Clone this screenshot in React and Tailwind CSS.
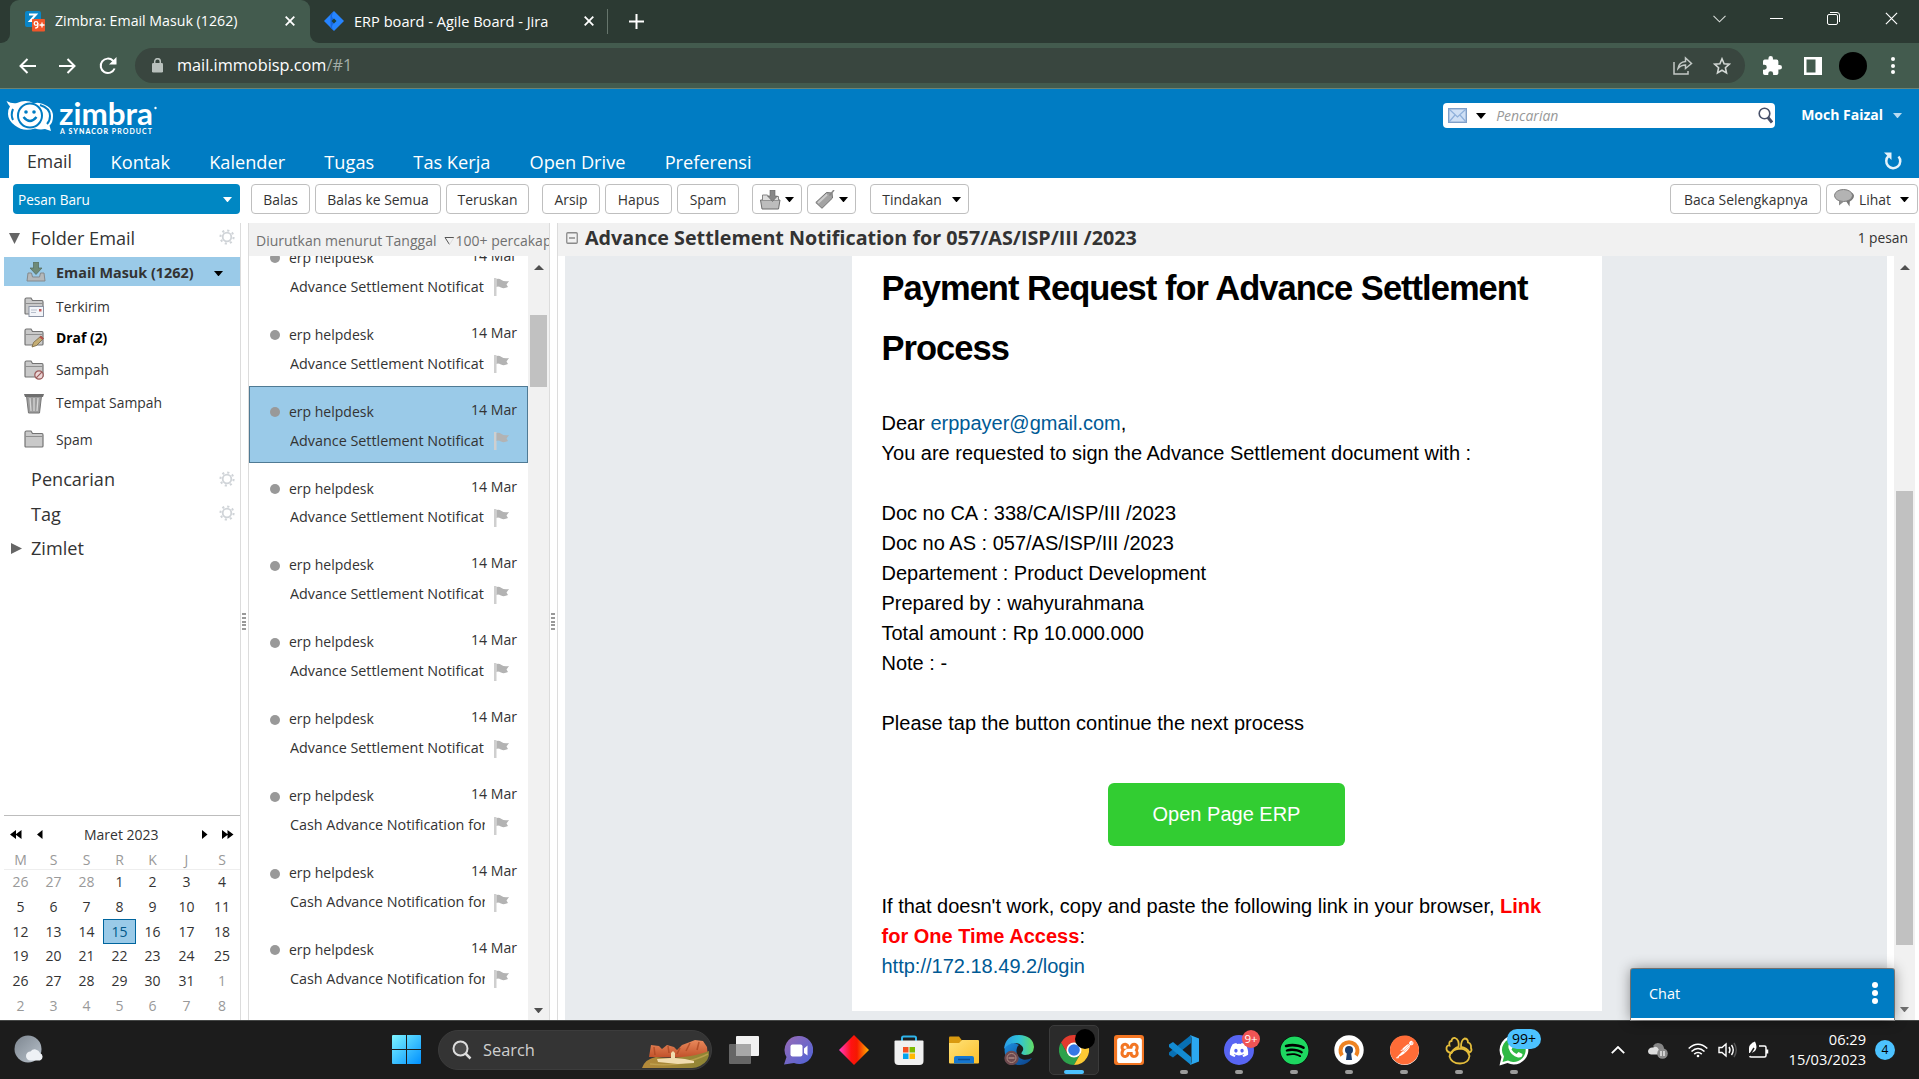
import { FaDiscord, FaSpotify, FaWhatsapp } from "react-icons/fa";
import { SiPostman, SiXampp } from "react-icons/si";

const Caret = ({ className = "", w = 10 }) => (
  <svg width={w} height={w * 0.6} viewBox="0 0 10 6" className={className}>
    <path d="M0 0h10L5 6z" fill="currentColor" />
  </svg>
);

const Close = ({ size = 10, className = "", sw = 1.8 }) => (
  <svg width={size} height={size} viewBox="0 0 10 10" className={className} fill="none" stroke="currentColor" strokeWidth={sw}>
    <path d="M.7.7l8.6 8.6M9.3.7L.7 9.3" />
  </svg>
);

function TabStrip() {
  return (
    <div className="flex h-[43px] bg-[#2c3a33] text-white">
      <div className="flex w-[10px] items-end bg-[#435b4e]">
        <div className="h-[43px] w-[10px] rounded-br-[9px] bg-[#2c3a33]" />
      </div>
      <div className="flex w-[300px] items-center rounded-t-[9px] bg-[#435b4e] pb-px pl-[15px]">
        <svg width="21" height="21" viewBox="0 0 21 21" className="shrink-0">
          <rect width="16" height="16" rx="2" fill="#0a86c8" />
          <path d="M4 3.5h7L5 10h5" fill="none" stroke="#fff" strokeWidth="2" />
          <rect x="7" y="8" width="13" height="12.5" rx="1" fill="#f0562a" />
          <circle cx="11" cy="12.5" r="1.8" fill="none" stroke="#fff" strokeWidth="1.3" />
          <path d="M12.8 12v3q0 2-2.6 2M14.5 14h5M17 11.5v5" fill="none" stroke="#fff" strokeWidth="1.3" />
        </svg>
        <span className="ml-[9px] w-[192px] whitespace-nowrap text-[14.2px] leading-none">Zimbra: Email Masuk (1262)</span>
        <Close className="ml-[38px]" />
      </div>
      <div className="w-[10px] bg-[#435b4e]">
        <div className="h-[43px] w-[10px] rounded-bl-[9px] bg-[#2c3a33]" />
      </div>
      <div className="flex w-[288px] items-center pb-px pl-[4px]">
        <svg width="20" height="20" viewBox="0 0 20 20" className="shrink-0">
          <path d="M10 0l10 10-10 10L0 10z" fill="#2684ff" />
          <path d="M10 0q-4 5 0 8.500L12 10l-2 2q-4 4 0 8l-3.500-3.500V3.500z" fill="#1666e0" />
          <path d="M10 7.500l2.500 2.500-2.500 2.500L7.500 10z" fill="#1d3f3a" />
        </svg>
        <span className="ml-[10px] w-[205px] whitespace-nowrap text-[14.6px] leading-none">ERP board - Agile Board - Jira</span>
        <Close className="ml-[25px]" />
        <div className="ml-auto h-[25px] w-px bg-[#66756c]" />
      </div>
      <div className="flex flex-1 items-center pl-[21px]">
        <svg width="15" height="15" viewBox="0 0 15 15" stroke="#fff" strokeWidth="2">
          <path d="M7.500 0v15M0 7.500h15" />
        </svg>
      </div>
      <div className="flex w-[206px] items-center pb-[6px]">
        <svg width="13" height="8" viewBox="0 0 13 8" fill="none" stroke="#d6dbd8" strokeWidth="1.100">
          <path d="M.5.800l6 6 6-6" />
        </svg>
        <div className="ml-[44px] h-px w-[13px] bg-white" />
        <svg width="13" height="13" viewBox="0 0 13 13" fill="none" stroke="#fff" className="ml-[44px]">
          <rect x=".5" y="2.500" width="10" height="10" rx="1.500" />
          <path d="M3 .5h7q2.500 0 2.500 2.500v7" />
        </svg>
        <Close className="ml-[45px]" size={13} sw={0.9} />
      </div>
    </div>
  );
}

function AddressBar() {
  return (
    <div className="flex h-[46px] items-center border-b border-[#6c8373] bg-[#435b4e] pl-[19px] text-white">
      <svg width="17" height="16" viewBox="0 0 17 16" fill="none" stroke="currentColor" strokeWidth="2">
        <path d="M17 8H1.500M8.500 1L1.500 8l7 7" />
      </svg>
      <svg width="17" height="16" viewBox="0 0 17 16" fill="none" stroke="currentColor" strokeWidth="2" className="ml-[23px]">
        <path d="M0 8h15.500M8.500 1l7 7-7 7" />
      </svg>
      <svg width="18" height="18" viewBox="0 0 18 18" fill="none" stroke="currentColor" strokeWidth="2" className="ml-[23px]">
        <path d="M15.600 11.500A7.200 7.200 0 1 1 14 3.700L16.500 6.500" />
        <path d="M17.500 0v7.500H10z" fill="currentColor" stroke="none" />
      </svg>
      <div className="ml-[18px] flex h-[35px] w-[1610px] items-center rounded-full bg-[#39463f] pl-[17px]">
        <svg width="11" height="15" viewBox="0 0 11 15">
          <rect y="5" width="11" height="9.500" rx="1.300" fill="#b9c1bd" />
          <path d="M2.700 6V3.500a2.800 2.800 0 0 1 5.600 0V6" fill="none" stroke="#b9c1bd" strokeWidth="1.500" />
        </svg>
        <span className="ml-[14px] text-[16.300px] leading-none">
          mail.immobisp.com<span className="text-[#a3ada8]">/#1</span>
        </span>
        <svg width="20" height="19" viewBox="0 0 20 19" fill="none" stroke="#c3c9c6" strokeWidth="1.500" className="ml-auto">
          <path d="M1 6v12h14v-3M5 12.500Q6 6 12.500 5.500V2l6 5.500-6 5V9Q8 9 5 12.500z" />
        </svg>
        <svg width="18" height="18" viewBox="0 0 18 18" fill="none" stroke="#d3d8d5" strokeWidth="1.600" className="ml-[20px] mr-[14px]">
          <path d="M9 1.800l2.100 4.900 5.200.5-3.900 3.500 1.100 5.200L9 13.200l-4.500 2.700 1.100-5.200L1.700 7.200l5.200-.5z" />
        </svg>
      </div>
      <svg width="19" height="19" viewBox="2 1 21 21" fill="currentColor" className="ml-[18px]">
        <path d="M20.500 11H19V7a2 2 0 0 0-2-2h-4V3.500a2.500 2.500 0 0 0-5 0V5H4a2 2 0 0 0-2 2v3.800h1.500a2.700 2.700 0 0 1 0 5.400H2V20a2 2 0 0 0 2 2h3.800v-1.500a2.700 2.700 0 0 1 5.400 0V22H17a2 2 0 0 0 2-2v-4h1.500a2.500 2.500 0 0 0 0-5z" />
      </svg>
      <svg width="18" height="18" viewBox="0 0 18 18" className="ml-[22px]">
        <path d="M0 0h18v18H0zM2.500 2.500v13h9v-13z" fill="#fff" fillRule="evenodd" />
      </svg>
      <div className="ml-[17px] size-[28px] rounded-full bg-black" />
      <div className="ml-[24px] flex flex-col gap-[2.500px]">
        <i className="size-1 rounded-full bg-white" />
        <i className="size-1 rounded-full bg-white" />
        <i className="size-1 rounded-full bg-white" />
      </div>
    </div>
  );
}

function ZimbraLogo() {
  return (
    <svg width="152" height="38" viewBox="-2 0 152 38" className="block">
      <path d="M-1.500 2Q4 5 9 4 18 0 26 4.500q3-1 5-.5 14 3 14 13 0 7-3.500 9.500L43 32l-6-2q-5 1-10-.5-12 3.500-20-3-7-5-7-11.500 0-5 2-7.500-2-2-3.500-5.500z" fill="#fff" />
      <circle cx="22" cy="16.500" r="12" fill="none" stroke="#007cc3" strokeWidth="2" />
      <path d="M5 10q-2.500 6 0 11M32 6q10 3 10 11 0 5-3 8" fill="none" stroke="#007cc3" strokeWidth="2" />
      <circle cx="18" cy="13" r="1.800" fill="#007cc3" />
      <circle cx="26" cy="13" r="1.800" fill="#007cc3" />
      <path d="M15.500 18q6.500 8 13 0" fill="none" stroke="#007cc3" strokeWidth="2.400" />
      <text x="51" y="26" fill="#fff" fontFamily="Lato" fontWeight="700" fontSize="31" textLength="94" lengthAdjust="spacingAndGlyphs">zimbra</text>
      <circle cx="147.500" cy="9" r="1.200" fill="#fff" />
      <text x="52" y="34.500" fill="#fff" fontFamily="Lato" fontSize="7" fontWeight="700" textLength="92">
        A <tspan fontWeight="900">SYNACOR</tspan> PRODUCT
      </text>
    </svg>
  );
}

function Header() {
  return (
    <div className="flex h-[89px] flex-col bg-[#007cc3] text-white">
      <div className="flex h-[56px] items-start">
        <div className="pl-[6px] pt-[10px]"><ZimbraLogo /></div>
        <div className="ml-auto mt-[14px] flex h-[25px] w-[332px] items-center rounded-[4px] bg-white pl-[5px] pr-[2px]">
          <svg width="19" height="15" viewBox="0 0 19 15">
            <rect x=".7" y=".7" width="17.600" height="13.600" fill="#cfe0f5" stroke="#7f9fc8" strokeWidth="1.400" />
            <path d="M1 1l8.500 8L18 1M1 14l6-7M18 14l-6-7" fill="none" stroke="#8fb0da" strokeWidth="1.200" />
          </svg>
          <Caret className="ml-[9px] text-black" w={10} />
          <span className="ml-[10px] text-[14px] italic leading-none text-[#999]">Pencarian</span>
          <svg width="15" height="17" viewBox="0 0 15 17" fill="none" stroke="#475069" className="ml-auto">
            <circle cx="6.500" cy="6.500" r="5.300" strokeWidth="1.600" />
            <path d="M10 10.500l4 5" strokeWidth="3" />
          </svg>
        </div>
        <span className="ml-[26px] mt-[19px] text-[14px] font-bold leading-none">Moch Faizal</span>
        <Caret w={9} className="ml-[10px] mr-[17px] mt-[24px] text-[#b9dcf2]" />
      </div>
      <div className="flex h-[33px] items-center gap-[2px] pl-[9px] pt-px text-[18.200px] leading-none">
        <div className="-mt-px flex h-[33px] w-[81px] items-center justify-center bg-white text-[17.700px] text-[#333]">Email</div>
        {["Kontak", "Kalender", "Tugas", "Tas Kerja", "Open Drive", "Preferensi"].map((t) => (
          <div key={t} className="px-[18.600px]">{t}</div>
        ))}
        <svg width="18" height="18" viewBox="0 0 18 18" className="ml-auto mr-[17px] -mt-[2px]" fill="none" stroke="#e4f2fa" strokeWidth="2.500">
          <path d="M4.500 4A7 7 0 1 0 14.500 4.500" />
          <path d="M0 .5h7.500V8z" fill="#e4f2fa" stroke="none" />
        </svg>
      </div>
    </div>
  );
}

const Btn = ({ className, children }) => (
  <div className={"flex h-[30px] shrink-0 items-center justify-center whitespace-nowrap rounded-[4px] border border-[#bfbfbf] bg-white pt-px text-[13.900px] leading-none text-[#333] " + className}>
    {children}
  </div>
);

function Toolbar() {
  return (
    <div className="flex h-[45px] items-start bg-white pl-[13px] pt-[6px]">
      <div className="flex h-[30px] w-[227px] items-center justify-between rounded-[4px] bg-[#0087c3] pl-[5px] pr-[8px] pt-px text-[13.600px] leading-none text-white">
        Pesan Baru <Caret w={9} />
      </div>
      <Btn className="ml-[11px] w-[59px]">Balas</Btn>
      <Btn className="ml-[5px] w-[126px]">Balas ke Semua</Btn>
      <Btn className="ml-[5px] w-[83px]">Teruskan</Btn>
      <Btn className="ml-[13px] w-[58px]">Arsip</Btn>
      <Btn className="ml-[5px] w-[67px]">Hapus</Btn>
      <Btn className="ml-[5px] w-[62px]">Spam</Btn>
      <Btn className="ml-[13px] w-[50px]">
        <svg width="21" height="20" viewBox="0 0 21 20">
          <path d="M2 19l-1.500-9h19.500l-1.500 9z" fill="#bdbdbd" stroke="#6d6d6d" />
          <path d="M2.500 10V5h5l1 1.500h10V10" fill="#ddd" stroke="#858585" />
          <path d="M10 0h5v6h2.500l-5 5.500-5-5.500H10z" fill="#888" stroke="#666" strokeWidth=".6" />
        </svg>
        <Caret w={9} className="ml-[4px] text-black" />
      </Btn>
      <Btn className="ml-[5px] w-[49px]">
        <svg width="20" height="19" viewBox="0 0 20 19">
          <path d="M.8 12.500L11.500 2.500l5.500.5.500 5L7 18.300z" fill="#a3a3a3" stroke="#707070" />
          <path d="M3 13l9-8.500" stroke="#ccc" strokeWidth="2" />
          <path d="M14.500 5.500L19 0" stroke="#888" strokeWidth="1.500" />
        </svg>
        <Caret w={9} className="ml-[4px] text-black" />
      </Btn>
      <Btn className="ml-[14px] w-[99px] pl-[4px]">Tindakan <Caret w={9} className="ml-[10px] text-black" /></Btn>
      <Btn className="ml-auto w-[151px] pl-px">Baca Selengkapnya</Btn>
      <Btn className="ml-[5px] mr-px w-[92px]">
        <svg width="20" height="19" viewBox="0 0 20 19" className="-mt-[3px]">
          <path d="M12 12l3.500 5.500.3-5Q20 10 20 6.500 19 3 15 3z" fill="#777" />
          <ellipse cx="9.500" cy="6.500" rx="9" ry="6" fill="#b3b3b3" stroke="#7b7b7b" />
          <path d="M5 11.500v5l5-4z" fill="#8b8b8b" />
        </svg>
        <span className="ml-[5px]">Lihat</span>
        <Caret w={9} className="ml-[9px] mr-px text-black" />
      </Btn>
    </div>
  );
}

const FolderShape = () => (
  <path d="M1 16V2.500Q1 1 2.500 1H7l1.500 2.500H18Q19 3.500 19 5v11q0 1-1 1H2q-1 0-1-1z" fill="#c9c9c9" stroke="#747474" strokeWidth="1.200" />
);

const Folder = ({ kind }) => {
  if (kind === "inbox")
    return (
      <svg width="20" height="20" viewBox="0 0 20 20" className="ml-[2px] -mt-[3px]">
        <path d="M2 11l-1 8h18l-1-8h-3.500l-1 4h-7l-1-4z" fill="#b4b8ba" stroke="#84898c" />
        <path d="M7.500 0h5v6h3.500L10 12.500 4 6h3.500z" fill="#6e8a78" stroke="#51685a" strokeWidth=".7" />
      </svg>
    );
  if (kind === "trash")
    return (
      <svg width="20" height="21" viewBox="0 0 20 21">
        <path d="M2.500 3h15L15.500 20h-11z" fill="#9d9d9d" stroke="#777" />
        <path d="M6 5l1 13M10 5v13M14 5l-1 13" stroke="#d6d6d6" strokeWidth="1.300" />
        <path d="M0 1h20l-1 3H1z" fill="#6f6f6f" />
      </svg>
    );
  return (
    <svg width="20" height="20" viewBox="0 0 20 20">
      <FolderShape />
      <path d="M1.500 6.500h17" stroke="#8f8f8f" />
      {kind === "sent" && (
        <>
          <rect x="5" y="9.500" width="14.500" height="10" fill="#f2f4f8" stroke="#8b93a3" />
          <path d="M7 13h6M7 15.500h5" stroke="#b7bfcc" />
          <rect x="15" y="12" width="2.500" height="2.500" fill="#c65b5b" />
        </>
      )}
      {kind === "draft" && (
        <>
          <path d="M8 19l1.500-4.500L17 8l2.500 2.500-7 7z" fill="#c4ad74" stroke="#776541" strokeWidth=".8" />
          <path d="M16 8.500l3 2.500" stroke="#b8524f" strokeWidth="2" />
        </>
      )}
      {kind === "junk" && (
        <>
          <circle cx="15" cy="15" r="4.200" fill="#ead7d7" stroke="#9b5a5a" strokeWidth="1.200" />
          <path d="M12.200 17.800l5.600-5.600" stroke="#9b5a5a" strokeWidth="1.200" />
        </>
      )}
    </svg>
  );
};

const Gear = () => (
  <svg width="16" height="16" viewBox="0 0 16 16" fill="none" stroke="#d0d4d8">
    <circle cx="8" cy="8" r="4.300" strokeWidth="1.800" />
    <circle cx="8" cy="8" r="6.600" strokeWidth="2" strokeDasharray="2.200 2.980" />
  </svg>
);

const folders = [
  ["inbox", "Email Masuk (1262)", "h-[29px] bg-[#9acae8] pt-[4px] font-bold text-[14.400px]"],
  ["sent", "Terkirim", "h-[41px]"],
  ["draft", "Draf (2)", "h-[22px] font-bold text-black"],
  ["junk", "Sampah", "h-[43px] pb-[2px]"],
  ["trash", "Tempat Sampah", "h-[22px]"],
  ["spam", "Spam", "h-[52px]"],
];

const weeks = [
  ["26", "27", "28", "1", "2", "3", "4"],
  ["5", "6", "7", "8", "9", "10", "11"],
  ["12", "13", "14", "15", "16", "17", "18"],
  ["19", "20", "21", "22", "23", "24", "25"],
  ["26", "27", "28", "29", "30", "31", "1"],
  ["2", "3", "4", "5", "6", "7", "8"],
];
const outside = (r, c) => (r === 0 && c < 3) || (r === 4 && c === 6) || r === 5;

const Section = ({ title, className, gear, arrow }) => (
  <div className={"flex items-center " + className}>
    <div className="flex w-[27px] items-center pl-[5px]">
      {arrow === "down" && <svg width="11" height="11" viewBox="0 0 11 11"><path d="M0 0h11L5.500 11z" fill="#666" /></svg>}
      {arrow === "right" && <svg width="11" height="11" viewBox="0 0 11 11" className="ml-[2px]"><path d="M0 0v11l11-5.500z" fill="#666" /></svg>}
    </div>
    <span className="text-[18.100px] leading-none text-[#333]">{title}</span>
    {gear && <span className="ml-auto mr-[5px] -mt-[2px]"><Gear /></span>}
  </div>
);

function Calendar() {
  return (
    <div className="mt-auto h-[205px] border-t border-[#bdbdbd] text-[14px] leading-none text-[#333]">
      <div className="flex h-[37px] items-center">
        <svg width="12" height="9" viewBox="0 0 12 9" className="ml-[6px]"><path d="M6 0v9L0 4.500zM11.500 0v9l-6-4.500z" fill="#000" /></svg>
        <svg width="6" height="9" viewBox="0 0 6 9" className="ml-[15px]"><path d="M5.500 0v9L0 4.500z" fill="#000" /></svg>
        <span className="ml-[41px] w-[77px]">Maret 2023</span>
        <svg width="6" height="9" viewBox="0 0 6 9" className="ml-[41px]"><path d="M0 0v9l5.500-4.500z" fill="#000" /></svg>
        <svg width="12" height="9" viewBox="0 0 12 9" className="ml-[14px]"><path d="M0 0v9l6-4.500zM5.500 0v9l6-4.500z" fill="#000" /></svg>
      </div>
      <div className="grid h-[16px] grid-cols-[33px_33px_33px_33px_33px_35px_36px] text-center text-[#999]">
        {["M", "S", "S", "R", "K", "J", "S"].map((d, i) => <span key={i}>{d}</span>)}
      </div>
      <div className="border-t border-[#eee]">
        {weeks.map((w, r) => (
          <div key={r} className="grid h-[24.700px] grid-cols-[33px_33px_33px_33px_33px_35px_36px] text-center">
            {w.map((d, c) => (
              <span
                key={c}
                className={
                  "flex items-center justify-center " +
                  (d === "15" ? "border border-[#00659e] bg-[#9acae8] text-[#00588a]" : outside(r, c) ? "text-[#999]" : "")
                }
              >
                {d}
              </span>
            ))}
          </div>
        ))}
      </div>
    </div>
  );
}

function Sidebar() {
  return (
    <div className="flex w-[241px] shrink-0 flex-col border-r border-[#dcdcdc] pl-[4px]">
      <Section title="Folder Email" className="h-[30px]" gear arrow="down" />
      <div className="mt-[4px]">
        {folders.map(([k, n, c]) => (
          <div key={k} className={"flex items-center pl-[20px] text-[13.900px] leading-none text-[#333] " + c}>
            <span className="flex w-[32px]"><Folder kind={k} /></span>
            {n}
            {k === "inbox" && <Caret w={9} className="ml-auto mr-[17px] text-black" />}
          </div>
        ))}
      </div>
      <Section title="Pencarian" className="mt-[-3px] h-[34px] pb-px" gear />
      <Section title="Tag" className="h-[34px]" gear />
      <Section title="Zimlet" className="h-[34px]" arrow="right" />
      <Calendar />
    </div>
  );
}

const Flag = () => (
  <svg width="16" height="18" viewBox="0 0 16 18">
    <rect width="2.500" height="18" fill="#cfcfcf" />
    <path d="M2.500 1Q5 0 7.500 2T15 3l-2.500 3.500L14 9Q10 11 7 9.500t-4.500-.5z" fill="#b3b3b3" />
  </svg>
);

const Grip = () => (
  <div className="mr-px mt-[390px] flex h-[17px] flex-col justify-between">
    {[0, 1, 2, 3, 4].map((i) => <i key={i} className="h-[2px] w-[4px] bg-[#999]" />)}
  </div>
);

const messages = [
  ...Array(7).fill("Advance Settlement Notificat"),
  ...Array(3).fill("Cash Advance Notification for"),
  "",
];

function MessageList() {
  return (
    <div className="flex w-[302px] shrink-0 flex-col overflow-hidden border-x border-[#dcdcdc]">
      <div className="flex h-[33px] shrink-0 items-center overflow-hidden whitespace-nowrap bg-[#f1f1f1] pl-[7px] pt-[3px] text-[14px] leading-none text-[#707070]">
        Diurutkan menurut Tanggal
        <svg width="11" height="9" viewBox="0 0 11 9" fill="none" className="ml-[8px] shrink-0">
          <path d="M10 .5H1l4.500 7" stroke="#555" /><path d="M10 .5l-4.500 7" stroke="#ddd" />
        </svg>
        100+ percakapan
      </div>
      <div className="flex min-h-0 flex-1">
        <div className="w-[279px] overflow-hidden">
          <div className="mt-[-23.600px]">
            {messages.map((m, i) => (
              <div
                key={i}
                className={"h-[76.900px] pt-[16px] text-[14px] leading-none text-[#333] " + (i === 2 ? "bg-[#9acae8] outline outline-1 -outline-offset-1 outline-[#4f7a94]" : "")}
              >
                <div className="flex h-5 items-center pl-[21px] pr-[11px]">
                  <span className="size-[10px] rounded-full bg-[#999]" />
                  <span className="ml-[9px] -mt-px">{m && "erp helpdesk"}</span>
                  <span className="-mt-[5px] ml-auto text-[14.100px]">14 Mar</span>
                </div>
                <div className="mt-[9px] flex h-5 items-center pl-[41px]">
                  <span className="flex h-5 w-[195px] items-center overflow-hidden whitespace-nowrap pb-px text-[14.350px]">{m}</span>
                  <span className="ml-[9px]"><Flag /></span>
                </div>
              </div>
            ))}
          </div>
        </div>
        <div className="flex w-[21px] flex-col items-center bg-[#f1f1f1]">
          <svg width="10" height="5" viewBox="0 0 10 5" className="mt-[9px]"><path d="M5 0l5 5H0z" fill="#505050" /></svg>
          <div className="mt-[45px] h-[72px] w-[17px] bg-[#c1c1c1]" />
          <Caret w={9} className="mb-[7px] mt-auto text-[#505050]" />
        </div>
      </div>
    </div>
  );
}

const details = [
  "Doc no CA : 338/CA/ISP/III /2023",
  "Doc no AS : 057/AS/ISP/III /2023",
  "Departement : Product Development",
  "Prepared by : wahyurahmana",
  "Total amount : Rp 10.000.000",
  "Note : -",
];

function EmailBody() {
  return (
    <div className="h-[755px] w-[750px] bg-white pl-[29.500px] pr-[30px] pt-[2px] text-[20px] leading-[30px] text-black [font-family:'Liberation_Sans',Arial,sans-serif]">
      <h1 className="text-[34.500px] font-bold leading-[60px] tracking-[-0.980px]">Payment Request for Advance Settlement Process</h1>
      <p className="mt-[30px]">Dear <span className="text-[#005a95]">erppayer@gmail.com</span>,</p>
      <p>You are requested to sign the Advance Settlement document with :</p>
      <div className="mt-[30px]">{details.map((d) => <p key={d}>{d}</p>)}</div>
      <p className="mt-[30px]">Please tap the button continue the next process</p>
      <div className="ml-[226.500px] mt-[45px] flex h-[63px] w-[237px] items-center justify-center rounded-[6px] bg-[#32cd32] pb-px text-white">Open Page ERP</div>
      <p className="mt-[45px]">
        If that doesn&apos;t work, copy and paste the following link in your browser, <b className="text-[#f00]">Link for One Time Access</b>:
      </p>
      <p className="text-[#005a95]">http://172.18.49.2/login</p>
    </div>
  );
}

function ReadingPane() {
  return (
    <div className="relative flex flex-1 flex-col border-l border-[#dcdcdc]">
      <div className="mr-[4px] flex h-[33px] items-center bg-[#f1f1f1] pb-[3px] pl-[8px] text-[#333]">
        <svg width="12" height="12" viewBox="0 0 12 12" fill="none" stroke="#8a8a8a">
          <rect x=".75" y=".75" width="10.500" height="10.500" rx="1" strokeWidth="1.300" />
          <path d="M3 6h6" strokeWidth="1.500" />
        </svg>
        <span className="ml-[7px] text-[19.730px] font-bold leading-none">Advance Settlement Notification for 057/AS/ISP/III /2023</span>
        <span className="ml-auto mr-[7px] text-[13.800px] leading-none">1 pesan</span>
      </div>
      <div className="flex min-h-0 flex-1 pl-[7px]">
        <div className="flex w-[1322px] bg-[#e8ebee] pl-[287px]"><EmailBody /></div>
        <div className="ml-[7px] flex w-[21px] flex-col items-center bg-[#f1f1f1]">
          <svg width="10" height="5" viewBox="0 0 10 5" className="mt-[9px]"><path d="M5 0l5 5H0z" fill="#505050" /></svg>
          <div className="mt-[221px] h-[454px] w-[17px] bg-[#c1c1c1]" />
          <Caret w={9} className="mb-[8px] mt-auto text-[#707070]" />
        </div>
      </div>
      <div className="absolute bottom-0 right-[25px] flex h-[51px] w-[263px] items-center justify-between rounded-t-[2px] border-b-2 border-white bg-[#007cc3] pl-[18px] pr-[16px] pt-[2px] text-[14.400px] leading-none text-white shadow-[0_0_14px_rgba(0,0,0,0.45),0_0_0_1px_#8d8d8d]">
        Chat
        <div className="-mt-[3px] flex flex-col gap-[2px]">
          <i className="size-[6px] rounded-full bg-white" />
          <i className="size-[6px] rounded-full bg-white" />
          <i className="size-[6px] rounded-full bg-white" />
        </div>
      </div>
    </div>
  );
}

const AppTile = ({ running, active, children }) => (
  <div className={"relative flex h-[50px] w-[50px] items-center justify-center rounded-[5px] " + (active ? "border border-[#3b3b3b] bg-[#2b2b2b]" : "")}>
    {children}
    {running && <i className="absolute bottom-[1px] left-[21px] h-[4px] w-[8px] rounded-full bg-[#9b9b9b]" />}
    {active && <i className="absolute bottom-0 left-[14px] h-[4px] w-[20px] rounded-full bg-[#4cc2ff]" />}
  </div>
);

function Taskbar() {
  return (
    <div className="flex h-[59px] items-center border-t border-[#454746] bg-[#1c1c1c] text-white">
      <svg width="30" height="30" viewBox="0 0 30 30" className="ml-[14px]">
        <defs>
          <linearGradient id="moon" x1="0" y1="0" x2="1" y2="1"><stop stopColor="#7d8690" /><stop offset="1" stopColor="#b9c2cb" /></linearGradient>
        </defs>
        <circle cx="14" cy="14" r="13.500" fill="url(#moon)" />
        <path d="M16.500 25.500a4.500 4.500 0 0 1 0-9 5.500 5.500 0 0 1 9.500 1.500 4 4 0 0 1 0 7.500z" fill="#eef1f5" />
      </svg>
      <svg width="30" height="30" viewBox="0 0 30 30" className="ml-[348px]">
        <defs>
          <linearGradient id="win" x1="0" y1="0" x2="1" y2="1"><stop stopColor="#7df4ff" /><stop offset="1" stopColor="#0090ff" /></linearGradient>
        </defs>
        <path d="M0 1Q0 0 1 0h13v14H0zM15 0h13q1 0 1 1v13H15zM0 15h14v14H1q-1 0-1-1zM15 15h14v13q0 1-1 1H15z" fill="url(#win)" />
      </svg>
      <div className="ml-[16px] flex h-[40px] w-[274px] items-center rounded-full border border-[#3c3c3c] bg-[#343434] pl-[13px]">
        <svg width="20" height="20" viewBox="0 0 20 20" fill="none" stroke="#ddd" strokeWidth="2">
          <circle cx="8.500" cy="8.500" r="7" fill="#4b4b4b" /><path d="M13.500 13.500l5 5" strokeWidth="2.500" />
        </svg>
        <span className="ml-[11px] mt-px text-[16.400px] leading-none text-[#cfcfcf]">Search</span>
        <svg width="68" height="28" viewBox="0 0 68 28" className="ml-auto mr-px mt-[8px]">
          <defs>
            <linearGradient id="rock" x1="0" y1="0" x2="0" y2="1"><stop stopColor="#e98a5c" /><stop offset="1" stopColor="#c04f28" /></linearGradient>
            <linearGradient id="hill" x1="0" y1="0" x2="1" y2="0"><stop stopColor="#b58a3a" /><stop offset="1" stopColor="#8c8434" /></linearGradient>
          </defs>
          <path d="M7 17l2-12 8 1 3 3 5-4 7 2 3 3 5-5 8-3 5-2 8 1 4 6 1 11z" fill="url(#rock)" />
          <path d="M12 7l1 8M26 6l1 7M38 8l-3 6M48 3l-4 8M57 2l-2 8" stroke="#a8441f" strokeWidth="1.500" opacity=".7" />
          <path d="M0 28q3-9 14-11 12 2 26 0 14-1 27-6 1 10-9 15-4 2-8 2z" fill="url(#hill)" />
          <path d="M8 24q22 2 36-2t22-8" stroke="#c8aa55" strokeWidth="1.500" fill="none" opacity=".7" />
          <path d="M15 19l14-1v-5l2-2 2 2v5l10 1 9 2v2l-16 1-20-2z" fill="#f1dcae" />
        </svg>
      </div>
      <svg width="30" height="28" viewBox="0 0 30 28" className="ml-[17px]">
        <rect y="8" width="22" height="20" fill="#666" rx="1" />
        <rect x="7" width="23" height="20" fill="#f2f2f2" rx="1" />
        <path d="M7 8h15v12H7z" fill="#a8a8a8" />
      </svg>
      <div className="ml-[15px] flex gap-[5px]">
        <AppTile>
          <svg width="29" height="29" viewBox="0 0 29 29" className="-ml-px">
            <defs><linearGradient id="meet" x1="0" y1="0" x2="1" y2="1"><stop stopColor="#9a6bb5" /><stop offset="1" stopColor="#4c63d8" /></linearGradient></defs>
            <path d="M15 0a14 14 0 1 1-5 27L0 28.500 2.500 21A14 14 0 0 1 15 0z" fill="url(#meet)" />
            <rect x="6.500" y="8.500" width="12" height="12" rx="2" fill="#fff" /><path d="M20 12.500l3.500-3v10L20 17z" fill="#fff" />
          </svg>
        </AppTile>
        <AppTile>
          <svg width="30" height="30" viewBox="0 0 30 30">
            <defs><linearGradient id="dia"><stop stopColor="#ff3cc8" /><stop offset=".4" stopColor="#ff1212" /><stop offset=".6" stopColor="#f51800" /><stop offset="1" stopColor="#ffb400" /></linearGradient></defs>
            <path d="M15 0l15 15-15 15L0 15z" fill="url(#dia)" />
          </svg>
        </AppTile>
        <AppTile>
          <svg width="30" height="30" viewBox="0 0 30 30">
            <path d="M8 8V3q0-1.500 1.500-1.500h11Q22 1.500 22 3v5" fill="none" stroke="#2fb4ea" strokeWidth="2" />
            <path d="M.5 6.500Q.5 5.500 1.500 5.500h27q1 0 1 1V26q0 4-4 4h-21q-4 0-4-4z" fill="#f0f0f0" />
            <path d="M9 12h5.500v5.500H9z" fill="#f25022" /><path d="M15.500 12H21v5.500h-5.500z" fill="#7fba00" />
            <path d="M9 18.500h5.500V24H9z" fill="#00a4ef" /><path d="M15.500 18.500H21V24h-5.500z" fill="#ffb900" />
          </svg>
        </AppTile>
        <AppTile>
          <svg width="30" height="28" viewBox="0 0 30 28">
            <defs><linearGradient id="fold" x1="0" y1="0" x2="1" y2="1"><stop stopColor="#ffe279" /><stop offset="1" stopColor="#fbbf2b" /></linearGradient></defs>
            <path d="M0 1.500Q0 .5 1 .5h9l3 4v4H0z" fill="#d99a10" />
            <path d="M0 7h10l3-3h16q1 0 1 1v21.500q0 1-1 1H1q-1 0-1-1z" fill="url(#fold)" />
            <path d="M5 27.500V22q0-2 2-2h16q2 0 2 2v5.500z" fill="#1577d0" /><path d="M9 23.500h12" stroke="#0c4e92" strokeWidth="1.500" />
          </svg>
        </AppTile>
        <AppTile>
          <svg width="30" height="30" viewBox="0 0 30 30">
            <defs>
              <linearGradient id="edgeTop"><stop stopColor="#2a9be8" /><stop offset=".5" stopColor="#2fc3d9" /><stop offset="1" stopColor="#63dc63" /></linearGradient>
              <linearGradient id="edgeLow" x1="0" y1="0" x2="1" y2="1"><stop stopColor="#1b8fe0" /><stop offset="1" stopColor="#0c3f86" /></linearGradient>
            </defs>
            <path d="M1 12Q-1 22 7 28q4 2 9 2 8-.5 12-7-5 2.500-9 1.500-7-2-6.500-9.500Q13 11 15 10 8 5 1 12z" fill="url(#edgeLow)" />
            <path d="M0 14Q1.500 0 15 0q14 .5 15 12-.5 8-9 8-5-.5-3-3 2.500-3 0-6Q15 7.500 11 8 4 8.500 0 14z" fill="url(#edgeTop)" />
            <circle cx="7.500" cy="23" r="7.200" fill="#6d4a50" /><circle cx="7.500" cy="23" r="4.500" fill="none" stroke="#b08d83" />
            <path d="M4.500 23h6" stroke="#c9a79b" />
          </svg>
        </AppTile>
        <AppTile active>
          <svg width="30" height="30" viewBox="0 0 30 30">
            <path d="M2 7.500A15 15 0 0 1 28 7.500H15L8.500 18.750z" fill="#e33b2e" />
            <path d="M2 7.500L8.500 18.750h13L15 30A15 15 0 0 1 2 7.500z" fill="#2da24c" />
            <path d="M28 7.500A15 15 0 0 1 15 30l6.500-11.250L15 7.500z" fill="#fcc934" />
            <circle cx="15" cy="15" r="7.500" fill="#fff" /><circle cx="15" cy="15" r="5.800" fill="#3478e5" />
          </svg>
          <i className="absolute right-[3px] top-[3px] size-[20px] rounded-full bg-black" />
        </AppTile>
        <AppTile>
          <div className="flex size-[30px] items-center justify-center rounded-[3px] bg-[#f37623]"><SiXampp size={25} /></div>
        </AppTile>
        <AppTile running>
          <svg width="30" height="30" viewBox="0 0 30 30">
            <path d="M22 0v8L4 22.500 0 20v-2.500z" fill="#0870b4" />
            <path d="M0 9.500L4 7l18 15v8L0 12z" fill="#138bd2" />
            <path d="M21 0l9 3.500v23L21 30q1.500-1 1.500-3V3Q22.500 1 21 0z" fill="#2ba8f0" />
          </svg>
        </AppTile>
        <AppTile running>
          <div className="flex size-[30px] items-center justify-center rounded-full bg-[#5865f2]"><FaDiscord size={20} /></div>
          <span className="absolute right-[4px] top-[5px] flex size-[18px] items-center justify-center rounded-full bg-[#f05454] text-[11.500px] leading-none">9+</span>
        </AppTile>
        <AppTile running>
          <div className="flex size-[29px] items-center justify-center rounded-full bg-black"><FaSpotify size={29} className="text-[#1ed760]" /></div>
        </AppTile>
        <AppTile running>
          <svg width="30" height="30" viewBox="0 0 30 30">
            <circle cx="15" cy="15" r="14.700" fill="#fff" />
            <path d="M8 20.500A8.500 8.500 0 1 1 22 20.500" fill="none" stroke="#ee8322" strokeWidth="4" />
            <circle cx="15" cy="15" r="4" fill="#1b3d6d" /><path d="M13 17h4l1 8h-6z" fill="#1b3d6d" />
          </svg>
        </AppTile>
        <AppTile running>
          <div className="flex size-[29px] items-center justify-center rounded-full bg-white"><SiPostman size={30} className="text-[#ff6c37]" /></div>
        </AppTile>
        <AppTile running>
          <svg width="29" height="29" viewBox="0 0 29 29" fill="none" stroke="#e4bd3b" strokeWidth="1.800">
            <path d="M6.500 17Q1 16 1.500 12q.5-3 3-2.500Q3.500 5 6.500 5 7 1.500 10 2q4.500 1.500 3.500 9-4.500 1-7 6z" />
            <path d="M16 11q0-7 3.500-8.500 3.500 0 3.500 4 3.500 1 3 5.500 1.500 3-1.500 4.500Q22 12 16 11z" />
            <path d="M15 12.500q8 .5 9.500 7.500-1 7.500-9.500 7.500T4.500 20.500Q6 13 15 12.500z" />
          </svg>
        </AppTile>
        <AppTile running>
          <div className="relative flex size-[31px] items-center justify-center">
            <svg width="31" height="31" viewBox="0 0 31 31">
              <path d="M16 .5A14.500 14.500 0 1 1 8.500 28L.5 30.500 2.500 22A14.500 14.500 0 0 1 16 .5z" fill="#fff" />
              <path d="M16 3A12 12 0 1 1 9 25.500L3.500 27l1.500-5.500A12 12 0 0 1 16 3z" fill="#2fb944" />
              <path d="M11 8l3 4-1.500 2.500q2 3.500 5 4.500l2-2 4 2q0 4-4.500 3.500Q12 21 9.500 13 9 9 11 8z" fill="#fff" />
            </svg>
          </div>
          <span className="absolute left-[18px] top-[4px] flex h-[20px] w-[34px] items-center justify-center rounded-full bg-[#4cc2ff] text-[14px] leading-none text-black">99+</span>
        </AppTile>
      </div>
      <svg width="14" height="8" viewBox="0 0 14 8" fill="none" stroke="#fff" strokeWidth="1.800" className="ml-[72px]"><path d="M.8 7.200L7 1l6.200 6.200" /></svg>
      <svg width="20" height="17" viewBox="0 0 20 17" className="ml-[23px]">
        <path d="M5 4a6 6 0 0 1 11 2q0 4-4 5z" fill="#858585" />
        <path d="M3 12.500Q0 12 0 9q1-4 5-3.500Q9 3 11 8l2 4.500z" fill="#ddd" />
        <circle cx="14.500" cy="11.500" r="5.300" fill="#8a8a8a" /><path d="M13 9v5M16 9v5" stroke="#fff" strokeWidth="1.200" />
      </svg>
      <svg width="20" height="15" viewBox="0 0 20 15" fill="none" stroke="#fff" strokeWidth="1.600" className="ml-[20px]">
        <path d="M.7 5.500Q10-3 19.300 5.500M3.500 8.500q6.500-6 13 0M6.200 11.200q3.800-3.400 7.600 0" /><circle cx="10" cy="13" r="1.300" fill="#fff" stroke="none" />
      </svg>
      <svg width="20" height="18" viewBox="0 0 20 18" fill="none" stroke="#fff" strokeWidth="1.400" className="ml-[10px]">
        <path d="M1 6.500h3L8 3v12l-4-3.500H1z" /><path d="M11 6q2 3 0 6M13.500 4q3.500 5 0 10" /><path d="M16 2q4.500 7 0 14" stroke="#555" />
      </svg>
      <svg width="21" height="18" viewBox="0 0 21 18" fill="none" stroke="#fff" strokeWidth="1.500" className="ml-[10px]">
        <path d="M11 5h5.500Q18 5 18 6.500v8q0 1.500-1.500 1.500H3q-1.500 0-1.500-1.500M19.500 8.500v4" /><path d="M1 12V7q0-4 6-6.500 3 6 0 9.500-2 2-6 2z" fill="#fff" stroke="none" /><path d="M1 15l5-8" stroke="#1c1c1c" />
      </svg>
      <div className="ml-[19px] flex w-[78px] flex-col items-end gap-[5.500px] pb-px text-[14.600px] leading-none">
        <span>06:29</span>
        <span>15/03/2023</span>
      </div>
      <div className="ml-[9px] flex size-[20px] items-center justify-center rounded-full bg-[#4cc2ff] text-[12px] leading-none text-black">4</div>
    </div>
  );
}

export default function App() {
  return (
    <div className="h-[1079px] w-[1919px] overflow-hidden bg-white [font-family:'Open_Sans','Noto_Sans',sans-serif]">
      <TabStrip />
      <AddressBar />
      <Header />
      <Toolbar />
      <div className="flex h-[797px]">
        <Sidebar />
        <div className="flex w-[7px] shrink-0 justify-center"><Grip /></div>
        <MessageList />
        <div className="flex w-[7px] shrink-0 justify-center"><Grip /></div>
        <ReadingPane />
      </div>
      <Taskbar />
    </div>
  );
}
